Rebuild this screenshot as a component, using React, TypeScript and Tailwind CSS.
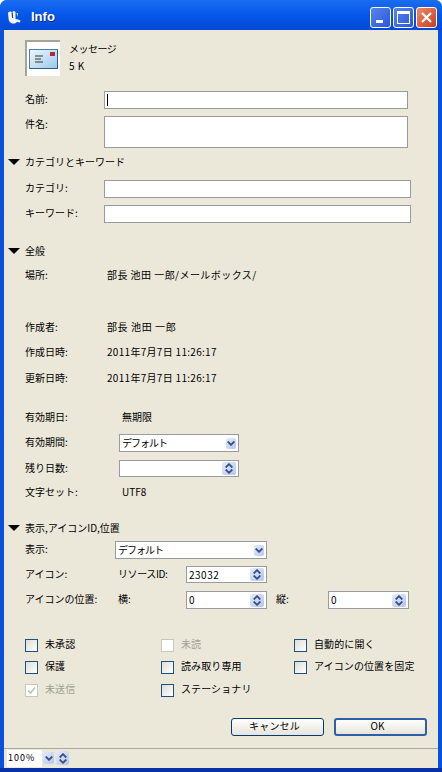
import React from "react";

const font = "font-['Noto_Sans_CJK_JP','Liberation_Sans',sans-serif]";

function Chev({ up = false }: { up?: boolean }) {
  return (
    <svg width="8" height="5" viewBox="0 0 8 5" className="block">
      <path d={up ? "M0.7 4.5 L4 1.2 L7.3 4.5" : "M0.7 0.5 L4 3.8 L7.3 0.5"} fill="none" stroke="#37507f" strokeWidth="1.8" />
    </svg>
  );
}

function Spin() {
  return (
    <div className="w-[14px] h-[13px] self-center mr-[2px] rounded-[2px] bg-gradient-to-br from-[#e4ebfb] to-[#b4c6ee] flex flex-col items-center justify-center gap-[1px]">
      <Chev up />
      <Chev />
    </div>
  );
}

function Drop() {
  return (
    <div className="w-[10px] h-[11px] self-center mr-[2px] rounded-[2px] bg-gradient-to-br from-[#e4ebfb] to-[#b4c6ee] flex items-center justify-center">
      <Chev />
    </div>
  );
}

function Field({ w, h = "h-[18px]", text, tail, extra = "" }: { w: string; h?: string; text?: string; tail?: React.ReactNode; extra?: string }) {
  return (
    <div className={`${w} ${h} shrink-0 bg-white border border-[#969ca0] flex items-stretch`}>
      <div className={`flex-1 pl-[2px] leading-[15px] text-[10px] text-black ${extra}`}>{text}</div>
      {tail}
    </div>
  );
}

function Label({ children, w = "w-[79px]", lh = "leading-[16px]" }: { children: React.ReactNode; w?: string; lh?: string }) {
  return <div className={`${w} shrink-0 text-[10px] ${lh} text-black`}>{children}</div>;
}

function Section({ children, className }: { children: React.ReactNode; className: string }) {
  return (
    <div className={`flex items-center h-[14px] ${className}`}>
      <svg width="12" height="6" viewBox="0 0 12 6" className="ml-[4px] mr-[5px] block">
        <path d="M0 0 H12 L6 6 Z" fill="#000" />
      </svg>
      <span className="text-[10px] leading-[14px] text-black">{children}</span>
    </div>
  );
}

function Check({ label, disabled, checked }: { label: string; disabled?: boolean; checked?: boolean }) {
  return (
    <div className="flex items-center h-[14px]">
      <div
        className={`w-[13px] h-[13px] shrink-0 border flex items-center justify-center ${
          disabled
            ? "border-[#c9c7ba] bg-white"
            : "border-[#1c5180] bg-gradient-to-br from-[#dcdcd7] to-[#ffffff]"
        }`}
      >
        {checked && (
          <svg width="9" height="9" viewBox="0 0 9 9">
            <path d="M1 4.5 L3.5 7 L8 1.5" fill="none" stroke="#c0c0b8" strokeWidth="1.6" />
          </svg>
        )}
      </div>
      <span className={`ml-[7px] mb-[3px] text-[10px] leading-[14px] whitespace-nowrap tracking-[0.1px] ${disabled ? "text-[#a09f94]" : "text-black"}`}>{label}</span>
    </div>
  );
}

export default function App() {
  return (
    <div className={`w-[442px] h-[772px] bg-white overflow-hidden ${font}`}>
      <div className="w-full h-full rounded-t-[7px] bg-[#0a50dc] flex flex-col border-b-[4px] border-b-[#0831a8]">
        {/* title bar */}
        <div className="h-[30px] shrink-0 rounded-t-[7px] flex items-center bg-gradient-to-b from-[#1a6cf0] via-[#0457e8] to-[#0449d6] pl-[7px] pr-[5px] pt-[4px]">
          <svg width="14" height="13" viewBox="0 0 14 13" className="block">
            <path d="M1 2 Q1.5 0 4 0.5 L5 1.5 L6.5 0 Q9 0 8.5 3 L8.5 8 L11 8.5 L13.5 9.5 L13 11.5 L10 11 L8 12.5 L5 12.5 Q1.5 11 1.5 7 Z" fill="#f4f4f0" />
            <path d="M5.2 1.5 L5.6 7" stroke="#27408f" strokeWidth="1.2" />
            <path d="M9.5 2 L11 2 L10.5 6 Z" fill="#dfe6f4" />
          </svg>
          <span className="ml-[10px] text-[13px] font-bold text-white font-['Liberation_Sans',sans-serif] [text-shadow:1px_1px_0_#0a2a90]">Info</span>
          <div className="ml-auto flex gap-[2px]">
            <div className="w-[21px] h-[21px] rounded-[3px] border border-white bg-gradient-to-br from-[#5a85ee] to-[#2a55d8] flex items-end pl-[5px] pb-[4px]">
              <div className="w-[7px] h-[3px] bg-white" />
            </div>
            <div className="w-[21px] h-[21px] rounded-[3px] border border-white bg-gradient-to-br from-[#5a85ee] to-[#2a55d8] flex items-center justify-center">
              <div className="w-[13px] h-[13px] border border-white border-t-[3px]" />
            </div>
            <div className="w-[21px] h-[21px] rounded-[3px] border border-white bg-gradient-to-br from-[#ee8a6a] to-[#c93a1c] flex items-center justify-center">
              <svg width="13" height="13" viewBox="0 0 13 13">
                <path d="M2 2 L11 11 M11 2 L2 11" stroke="#fff" strokeWidth="2.2" />
              </svg>
            </div>
          </div>
        </div>

        {/* client area */}
        <div className="flex-1 mx-[4px] bg-[#ebe8da] flex flex-col min-h-0">
          <div className="flex-1 pl-[21px] min-h-0">
            <div className="flex mt-[10px] h-[36px]">
              <div className="w-[35px] h-[36px] bg-white border-t-2 border-l-2 border-[#a6a498] flex items-center justify-center">
                <svg width="29" height="20" viewBox="0 0 29 20" className="block">
                  <defs>
                    <linearGradient id="m" x1="0" y1="0" x2="1" y2="1">
                      <stop offset="0" stopColor="#eef7fd" />
                      <stop offset="1" stopColor="#9cc8e8" />
                    </linearGradient>
                  </defs>
                  <rect x="0.5" y="0.5" width="28" height="19" fill="url(#m)" stroke="#4a7fa8" />
                  <path d="M1 19.5 H28.5 V1" fill="none" stroke="#2f5f8c" />
                  <rect x="21" y="3" width="5" height="4" fill="#b0283c" />
                  <path d="M6 7 H14 M6 10 H12 M6 13 H14" stroke="#333" strokeWidth="1" />
                </svg>
              </div>
              <div className="ml-[9px] text-[10px] text-black tracking-[-0.5px]">
                <div className="leading-[18px]">メッセージ</div>
                <div className="leading-[16px] tracking-[0.5px]">5 K</div>
              </div>
            </div>

            <div className="flex mt-[15px]">
              <Label>名前:</Label>
              <div className="w-[304px] h-[18px] shrink-0 bg-white border border-[#969ca0] pl-[2px] pt-[2px]">
                <div className="w-px h-[12px] bg-black" />
              </div>
            </div>
            <div className="flex mt-[7px]">
              <Label>件名:</Label>
              <Field w="w-[304px]" h="h-[32px]" />
            </div>

            <Section className="-ml-[21px] mt-[7px]">カテゴリとキーワード</Section>
            <div className="flex mt-[11px]">
              <Label>カテゴリ:</Label>
              <Field w="w-[307px]" />
            </div>
            <div className="flex mt-[7px]">
              <Label>キーワード:</Label>
              <Field w="w-[307px]" />
            </div>

            <Section className="-ml-[21px] mt-[21px]">全般</Section>
            <div className="flex mt-[8px]"><Label w="w-[82px]" lh="leading-[18px]">場所:</Label><div className="text-[10px] leading-[18px] text-black tracking-[0.45px]">部長 池田 一郎/メールボックス/</div></div>
            <div className="flex mt-[34px]"><Label w="w-[82px]" lh="leading-[18px]">作成者:</Label><div className="text-[10px] leading-[18px] text-black tracking-[0.6px]">部長 池田 一郎</div></div>
            <div className="flex mt-[7px]"><Label w="w-[82px]" lh="leading-[18px]">作成日時:</Label><div className="text-[10px] leading-[18px] text-black tracking-[0.3px]">2011年7月7日 11:26:17</div></div>
            <div className="flex mt-[8px]"><Label w="w-[82px]" lh="leading-[18px]">更新日時:</Label><div className="text-[10px] leading-[18px] text-black tracking-[0.3px]">2011年7月7日 11:26:17</div></div>

            <div className="flex mt-[21px]"><Label w="w-[97px]" lh="leading-[18px]">有効期日:</Label><div className="text-[10px] leading-[18px] text-black">無期限</div></div>
            <div className="flex mt-[8px]">
              <Label w="w-[94px]" lh="leading-[16px]">有効期間:</Label>
              <Field w="w-[120px]" text="デフォルト" extra="tracking-[-1px]" tail={<Drop />} />
            </div>
            <div className="flex mt-[8px]">
              <Label w="w-[94px]" lh="leading-[15px]">残り日数:</Label>
              <Field w="w-[120px]" h="h-[17px]" tail={<Spin />} />
            </div>
            <div className="flex mt-[6px]"><Label w="w-[97px]" lh="leading-[18px]">文字セット:</Label><div className="text-[10px] leading-[18px] text-black">UTF8</div></div>

            <Section className="-ml-[21px] mt-[20px]">表示,アイコンID,位置</Section>
            <div className="flex mt-[6px]">
              <Label w="w-[90px]" lh="leading-[15px]">表示:</Label>
              <Field w="w-[152px]" text="デフォルト" extra="tracking-[-1px]" tail={<Drop />} />
            </div>
            <div className="flex mt-[7px]">
              <Label w="w-[93px]" lh="leading-[15px]">アイコン:</Label>
              <div className="w-[68px] shrink-0 text-[10px] leading-[15px] text-black tracking-[-0.4px]">リソースID:</div>
              <Field w="w-[81px]" h="h-[17px]" text="23032" extra="tracking-[0.5px]" tail={<Spin />} />
            </div>
            <div className="flex mt-[8px]">
              <Label w="w-[93px]" lh="leading-[15px]">アイコンの位置:</Label>
              <div className="w-[68px] shrink-0 text-[10px] leading-[15px] text-black">横:</div>
              <Field w="w-[81px]" text="0" tail={<Spin />} />
              <div className="ml-[9px] w-[52px] shrink-0 text-[10px] leading-[15px] text-black">縦:</div>
              <Field w="w-[81px]" text="0" tail={<Spin />} />
            </div>

            <div className="grid grid-cols-[136px_133px_1fr] gap-y-[8.5px] mt-[29px]">
              <Check label="未承認" />
              <Check label="未読" disabled />
              <Check label="自動的に開く" />
              <Check label="保護" />
              <Check label="読み取り専用" />
              <Check label="アイコンの位置を固定" />
              <Check label="未送信" disabled checked />
              <Check label="ステーショナリ" />
            </div>

            <div className="flex justify-end gap-[10px] mt-[21px] pr-[11px]">
              <div className="w-[93px] h-[18px] rounded-[3px] border border-[#003c74] bg-gradient-to-b from-white to-[#e6e4da] text-[10px] leading-[13px] text-center text-black pr-[6px] tracking-[0.2px]">キャンセル</div>
              <div className="w-[93px] h-[18px] rounded-[3px] border-2 border-[#2f5fa8] bg-gradient-to-b from-white to-[#e6e4da] text-[10px] leading-[11px] text-center text-black pr-[6px]">OK</div>
            </div>
          </div>

          {/* status bar */}
          <div className="h-[20px] shrink-0 border-t border-[#a9a79b] flex items-center pl-[3px] pb-[1px]">
            <div className="w-[35px] h-[17px] bg-white text-[9px] leading-[15px] text-black tracking-[1px] pl-[1px]">100%</div>
            <div className="ml-[1px] w-[11px] h-[12px] rounded-[2px] bg-gradient-to-br from-[#e4ebfb] to-[#b4c6ee] flex items-center justify-center"><Chev /></div>
            <div className="ml-[2px] w-[13px] h-[14px] rounded-[2px] bg-gradient-to-br from-[#e4ebfb] to-[#b4c6ee] flex flex-col items-center justify-center gap-[1px]"><Chev up /><Chev /></div>
          </div>
        </div>
      </div>
    </div>
  );
}
